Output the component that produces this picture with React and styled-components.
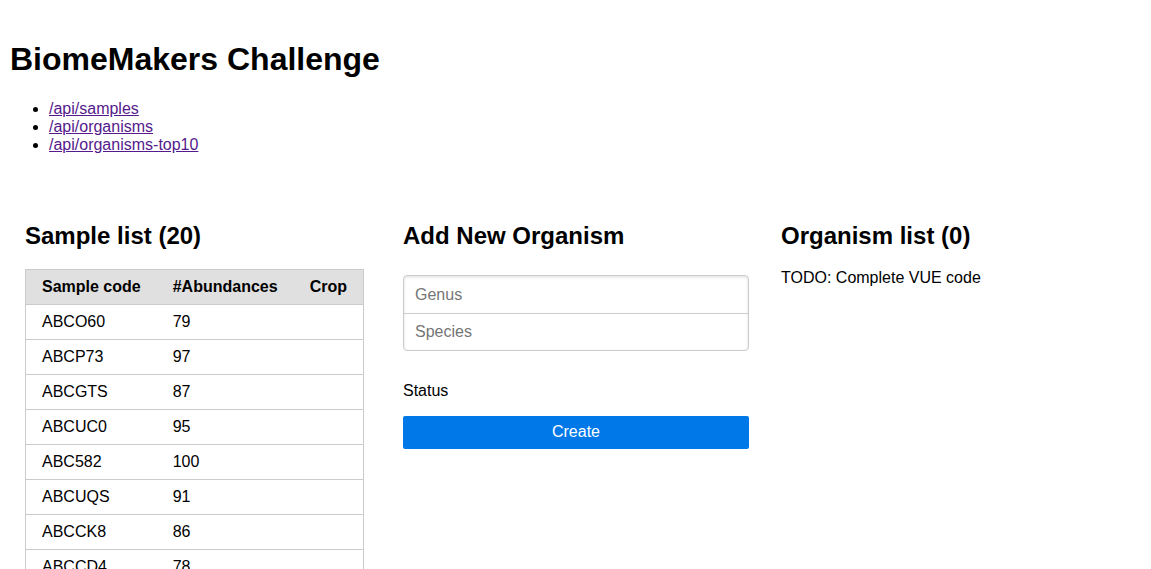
import React, {useState} from 'react';
import styled, {createGlobalStyle} from 'styled-components';

const GlobalStyle = createGlobalStyle`
  body {
    margin: 8px;
    font-family: "Liberation Sans", Arial, sans-serif;
    font-size: 16px;
    color: #000;
    background: #fff;
  }
`;

const Page = styled.div`
  padding: 12px 0 0 1px;
`;

const Title = styled.h1`
  font-size: 32px;
  font-weight: bold;
  margin: 21.44px 0 21.44px 1px;
`;

const LinkList = styled.ul`
  margin: 16px 0;
  padding-left: 40px;
`;

const Link = styled.a`
  color: #551a8b;
  text-decoration: underline;
`;

const Grid = styled.div`
  display: grid;
  grid-template-columns: repeat(3, 1fr);
  margin-top: 48px;
`;

const Column = styled.div`
  padding: 0 16px;
  min-width: 0;
`;

const Heading = styled.h2`
  font-size: 24px;
  font-weight: bold;
  margin: 19.92px 0 18.92px;
`;

const Table = styled.table`
  border-collapse: collapse;
  border-spacing: 0;
  border: 1px solid #cbcbcb;
`;

const Head = styled.thead`
  background: #e0e0e0;
  color: #000;
  text-align: left;
  vertical-align: bottom;
`;

const Cell = styled.td`
  padding: 8px 16px;
  line-height: 18px;
  border-bottom: 1px solid #cbcbcb;
  font-weight: ${props => props.head ? 'bold' : 'normal'};
  text-align: left;
  white-space: nowrap;
`;

const Fieldset = styled.fieldset`
  margin: 0;
  padding: 6.5px 0 12px;
  border: 0;
`;

const Group = styled.div`
  border: 1px solid #ccc;
  border-radius: 4px;
  box-shadow: inset 0 1px 3px #ddd;
  overflow: hidden;
`;

const Input = styled.input`
  display: block;
  box-sizing: border-box;
  width: 100%;
  height: 37px;
  padding: 0 11px;
  border: 0;
  border-top: ${props => props.last ? '1px solid #ccc' : '0'};
  font-family: "Liberation Sans", Arial, sans-serif;
  font-size: 16px;
  outline: none;
  background: transparent;

  &::placeholder {
    color: #757575;
  }
`;

const Status = styled.p`
  margin: 19px 0 15px;
  line-height: 18.4px;
`;

const Button = styled.button`
  display: block;
  width: 100%;
  height: 33px;
  border: 0;
  border-radius: 2px;
  background: #0078e7;
  color: #fff;
  font-family: "Liberation Sans", Arial, sans-serif;
  font-size: 16px;
  cursor: pointer;
`;

const Note = styled.p`
  margin: 16px 0;
`;

const samples = [
    ['ABCO60', 79], ['ABCP73', 97], ['ABCGTS', 87], ['ABCUC0', 95],
    ['ABC582', 100], ['ABCUQS', 91], ['ABCCK8', 86], ['ABCCD4', 78],
    ['ABCX19', 83], ['ABCL2M', 92], ['ABCT07', 88], ['ABCR45', 94],
    ['ABCQ8W', 81], ['ABCN33', 99], ['ABCZ6H', 85], ['ABCE12', 90],
    ['ABCJ5K', 77], ['ABCW90', 96], ['ABCB4F', 84], ['ABCH71', 93],
];

const App = () => {
    const [genus, setGenus] = useState('');
    const [species, setSpecies] = useState('');

    return (
        <Page>
            <GlobalStyle/>
            <Title>BiomeMakers Challenge</Title>
            <LinkList>
                <li><Link href="#">/api/samples</Link></li>
                <li><Link href="#">/api/organisms</Link></li>
                <li><Link href="#">/api/organisms-top10</Link></li>
            </LinkList>
            <Grid>
                <Column>
                    <Heading>Sample list ({samples.length})</Heading>
                    <Table>
                        <Head>
                            <tr>
                                <Cell as="th" head>Sample code</Cell>
                                <Cell as="th" head>#Abundances</Cell>
                                <Cell as="th" head>Crop</Cell>
                            </tr>
                        </Head>
                        <tbody>
                            {samples.map(([code, count]) => (
                                <tr key={code}>
                                    <Cell>{code}</Cell>
                                    <Cell>{count}</Cell>
                                    <Cell></Cell>
                                </tr>
                            ))}
                        </tbody>
                    </Table>
                </Column>
                <Column>
                    <Heading>Add New Organism</Heading>
                    <form onSubmit={e => e.preventDefault()}>
                        <Fieldset>
                            <Group>
                                <Input placeholder="Genus" value={genus} onChange={e => setGenus(e.target.value)}/>
                                <Input last placeholder="Species" value={species} onChange={e => setSpecies(e.target.value)}/>
                            </Group>
                        </Fieldset>
                        <Status>Status</Status>
                        <Button type="submit">Create</Button>
                    </form>
                </Column>
                <Column>
                    <Heading>Organism list (0)</Heading>
                    <Note>TODO: Complete VUE code</Note>
                </Column>
            </Grid>
        </Page>
    );
};

export default App;
